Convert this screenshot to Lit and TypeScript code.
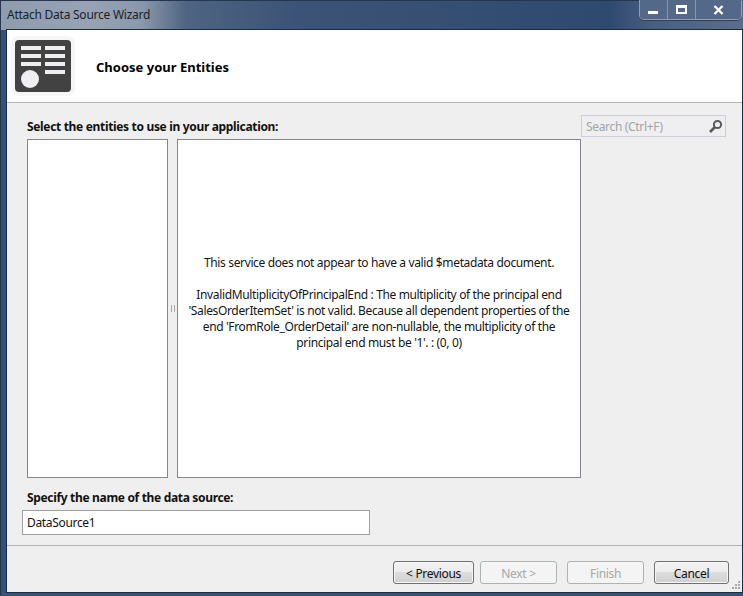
import { LitElement, html, css } from "lit";
import { customElement } from "lit/decorators.js";

@customElement("app-root")
export class AppRoot extends LitElement {
  static styles = css`
    :host { display: block; width: 743px; height: 596px; overflow: hidden; font-family: "Noto Sans", "Open Sans", sans-serif; font-size: 12px; letter-spacing: -0.33px; color: #111; }
    * { box-sizing: border-box; }
    .frame { width: 743px; height: 596px; display: flex; flex-direction: column; padding: 0 0 3px 5px; border-left: 1px solid #26364e; border-top: 1px solid #26364e;
      background:
        linear-gradient(90deg, #8f9cae 0, #97a3b4 12%, #8a98ac 19%, #4e6482 25%, #3b5376 40%, #2f4a6f 82%, #4a5f80 88%, #5a6d8c 100%) top left / 100% 29px no-repeat,
        #35507a; }
    .titlebar { height: 28px; flex: none; display: flex; justify-content: space-between; align-items: flex-start; }
    .title { color: #1a1f26; margin-top: 6px; margin-left: 1px; letter-spacing: -0.25px; line-height: 16px; }
    .caps { display: flex; height: 20px; margin-right: 1px; margin-top: -1px; border: 1px solid #8f9db0; border-top: none; border-radius: 0 0 5px 5px; box-shadow: 0 1px 0 #2f415c; overflow: hidden; }
    .cap { display: flex; align-items: center; justify-content: center; height: 19px; width: 28px; background: #54688a; border-right: 1px solid #8596ad; }
    .cap.x { width: 45px; border-right: none; }
    .client { flex: 1; display: flex; flex-direction: column; background: #efefef; border: 1px solid #1e2c40; min-height: 0; }
    .header { height: 73px; flex: none; background: #fff; border-bottom: 1px solid #b4b4b4; display: flex; align-items: center; padding-left: 4px; }
    .logo { display: block; flex: none; }
    .header h1 { margin: 0 0 0 21px; font-size: 13px; font-weight: 700; color: #000; position: relative; top: 1px; letter-spacing: 0; }
    .body { flex: 1; padding: 12px 0 0 20px; display: grid; grid-template-columns: 141px 9px 404px 145px; grid-template-rows: 24px 339px; }
    .lead { grid-column: 1 / 4; font-weight: 700; line-height: 24px; white-space: nowrap; }
    .search { height: 22px; border: 1px solid #cccedb; background: #efeff2; display: flex; align-items: center; justify-content: space-between; padding: 0 2px 0 4px; color: #a2a4a5; }
    .pane { background: #fff; border: 1px solid #828790; }
    .msg { display: flex; flex-direction: column; justify-content: center; align-items: center; text-align: center; line-height: 16px; padding-bottom: 12px; color: #151515; letter-spacing: -0.36px; }
    .msg p { margin: 0; white-space: pre; }
    .msg p + p { margin-top: 16px; }
    .grip { display: flex; align-items: center; justify-content: center; gap: 2px; }
    .grip i { display: block; width: 1px; height: 7px; background: #a8a8a8; }
    .name { flex: none; padding: 11px 0 10px 15px; }
    .name label { display: block; font-weight: 700; padding-left: 5px; line-height: 16px; margin-bottom: 4px; }
    .input { width: 348px; height: 25px; border: 1px solid #a0a0a0; background: #fff; padding-left: 4px; line-height: 24px; }
    .footer { flex: none; height: 47px; border-top: 1px solid #b4b4b4; display: flex; position: relative; padding: 15px 0 0 386px; }
    .btn { height: 23px; border: 1px solid #707070; border-radius: 3px; display: flex; align-items: center; justify-content: center; padding-top: 1px;
      background: linear-gradient(#f3f3f3 0, #ebebeb 48%, #dddddd 50%, #cfcfcf 100%); box-shadow: inset 0 0 0 1px #f6f6f6; color: #111; }
    .btn.off { background: #f4f4f4; border-color: #adb2b5; box-shadow: none; color: #a6a6a6; }
    .w81 { width: 81px; margin-right: 6px; }
    .w77 { width: 77px; margin-right: 10px; }
    .w75 { width: 75px; }
    .sizer { position: absolute; right: 2px; bottom: 1px; display: block; }
  `;

  render() {
    return html`
      <div class="frame">
        <div class="titlebar">
          <div class="title">Attach Data Source Wizard</div>
          <div class="caps">
            <div class="cap"><svg width="11" height="10"><rect width="10" height="3" y="6" fill="#fff"/></svg></div>
            <div class="cap"><svg width="11" height="9"><path d="M0 0h11v9H0z M2 3v4h7V3z" fill="#fff" fill-rule="evenodd"/></svg></div>
            <div class="cap x"><svg width="11" height="10" viewBox="0 0 11 10"><path d="M1.5 1l8 8M9.5 1l-8 8" stroke="#fff" stroke-width="2.4" fill="none"/></svg></div>
          </div>
        </div>
        <div class="client">
          <div class="header">
            <svg class="logo" width="64" height="60" viewBox="0 0 64 60">
              <rect width="64" height="60" rx="8" fill="#f6f6f6"/>
              <rect x="4" y="4" width="56" height="52" rx="4" fill="#424242"/>
              <g fill="#efeff2">
                <rect x="10" y="10" width="20" height="4"/><rect x="34" y="10" width="20" height="4"/>
                <rect x="10" y="18" width="20" height="4"/><rect x="34" y="18" width="20" height="4"/>
                <rect x="10" y="26" width="20" height="4"/><rect x="34" y="26" width="20" height="4"/>
                <rect x="34" y="34" width="20" height="4"/>
                <circle cx="19" cy="43" r="9"/>
              </g>
            </svg>
            <h1>Choose your Entities</h1>
          </div>
          <div class="body">
            <div class="lead">Select the entities to use in your application:</div>
            <div class="search">
              <span>Search (Ctrl+F)</span>
              <svg width="15" height="15" viewBox="0 0 15 15"><circle cx="9.5" cy="5.5" r="3.6" fill="none" stroke="#5a5a5a" stroke-width="2"/><path d="M7 8l-5 5" stroke="#5a5a5a" stroke-width="2.6"/></svg>
            </div>
            <div class="pane"></div>
            <div class="grip"><i></i><i></i></div>
            <div class="pane msg">
              <p>This service does not appear to have a valid $metadata document.</p>
              <p>InvalidMultiplicityOfPrincipalEnd : The multiplicity of the principal end
'SalesOrderItemSet' is not valid. Because all dependent properties of the
end 'FromRole_OrderDetail' are non-nullable, the multiplicity of the
principal end must be '1'. : (0, 0)</p>
            </div>
          </div>
          <div class="name">
            <label>Specify the name of the data source:</label>
            <div class="input">DataSource1</div>
          </div>
          <div class="footer">
            <div class="btn w81">&lt; Previous</div>
            <div class="btn off w77">Next &gt;</div>
            <div class="btn off w77">Finish</div>
            <div class="btn w75">Cancel</div>
            <svg class="sizer" width="10" height="11" fill="#a8a8a8"><rect x="8" y="1" width="2" height="2"/><rect x="5" y="4" width="2" height="2"/><rect x="8" y="4" width="2" height="2"/><rect x="2" y="7" width="2" height="2"/><rect x="5" y="7" width="2" height="2"/><rect x="8" y="7" width="2" height="2"/></svg>
          </div>
        </div>
      </div>
    `;
  }
}
